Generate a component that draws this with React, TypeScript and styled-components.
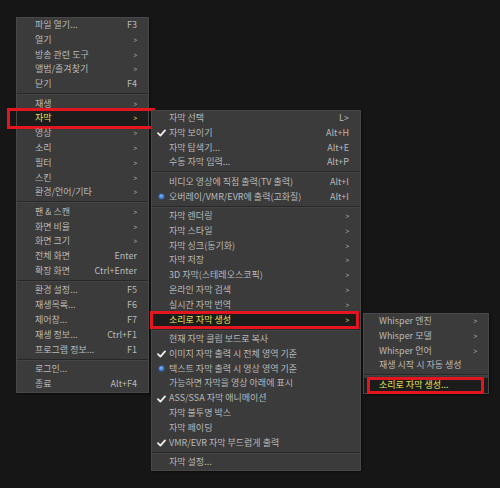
import styled, { createGlobalStyle } from "styled-components";

type Mark = "check" | "dot";
type Box = [number, number, number, number];
type Item =
	| "sep"
	| { label: string; keys?: string; arrow?: boolean; mark?: Mark; hot?: boolean; box?: Box };

const GlobalStyle = createGlobalStyle`
	html, body {
		margin: 0;
		padding: 0;
		background: #161616;
	}
	#root {
		position: relative;
		width: 500px;
		height: 488px;
		overflow: hidden;
		font-family: "Noto Sans CJK KR", "Noto Sans", sans-serif;
	}
`;

const Menu = styled.div<{ $x: number; $y: number; $w: number }>`
	position: absolute;
	left: ${(p) => p.$x}px;
	top: ${(p) => p.$y}px;
	width: ${(p) => p.$w}px;
	box-sizing: border-box;
	background: #3b3b3b;
	border: 1px solid #484848;
	display: flex;
	flex-direction: column;
	box-shadow: 1px 1px 2px rgba(0, 0, 0, 0.5);
`;

const Row = styled.div<{ $pad: number; $hot?: boolean; $box?: Box }>`
	position: relative;
	display: grid;
	grid-template-columns: ${(p) => p.$pad}px 1fr auto;
	align-items: center;
	height: 14.8px;
	padding-right: 11px;
	font-size: 9px;
	line-height: 14.8px;
	white-space: nowrap;
	color: ${(p) => (p.$hot ? "#e6e35a" : "#b9b9b9")};
	background: ${(p) => (p.$hot ? "#1c1c1c" : "transparent")};

	${(p) =>
		p.$box &&
		`&::after {
			content: "";
			position: absolute;
			top: ${p.$box[0]}px;
			right: ${p.$box[1]}px;
			bottom: ${p.$box[2]}px;
			left: ${p.$box[3]}px;
			border: 3px solid #e3151e;
			pointer-events: none;
		}`}
`;

const MarkCell = styled.span`
	display: flex;
	align-items: center;
	justify-content: center;
	padding-left: 2px;
`;

const Label = styled.span``;

const Keys = styled.span`
	text-align: right;
	padding-left: 12px;
`;

const Arrow = styled.span`
	font-size: 8px;
	transform: scaleX(0.8);
	display: inline-block;
`;

const Dot = styled.span`
	width: 5px;
	height: 5px;
	border-radius: 50%;
	background: radial-gradient(circle at 40% 35%, #7fb6ff, #2f78e0 70%);
	box-shadow: 0 0 2px #3a86f0;
`;

const Separator = styled.div`
	height: 4.6px;
	display: flex;
	flex-direction: column;
	justify-content: center;

	&::before {
		content: "";
		height: 1px;
		background: #272727;
	}
	&::after {
		content: "";
		height: 1px;
		background: #444444;
	}
`;

const Check = () => (
	<svg width="9" height="8" viewBox="0 0 9 8">
		<path d="M1 4.2 L3.4 6.6 L8 1.4" fill="none" stroke="#eeeeee" strokeWidth="1.8" strokeLinecap="round" strokeLinejoin="round" />
	</svg>
);

const mainMenu: Item[] = [
	{ label: "파일 열기...", keys: "F3" },
	{ label: "열기", arrow: true },
	{ label: "방송 관련 도구", arrow: true },
	{ label: "앨범/즐겨찾기", arrow: true },
	{ label: "닫기", keys: "F4" },
	"sep",
	{ label: "재생", arrow: true },
	{ label: "자막", arrow: true, hot: true, box: [-3, -7, -3, -10] },
	{ label: "영상", arrow: true },
	{ label: "소리", arrow: true },
	{ label: "필터", arrow: true },
	{ label: "스킨", arrow: true },
	{ label: "환경/언어/기타", arrow: true },
	"sep",
	{ label: "팬 & 스캔", arrow: true },
	{ label: "화면 비율", arrow: true },
	{ label: "화면 크기", arrow: true },
	{ label: "전체 화면", keys: "Enter" },
	{ label: "확장 화면", keys: "Ctrl+Enter" },
	"sep",
	{ label: "환경 설정...", keys: "F5" },
	{ label: "재생목록...", keys: "F6" },
	{ label: "제어창...", keys: "F7" },
	{ label: "재생 정보...", keys: "Ctrl+F1" },
	{ label: "프로그램 정보...", keys: "F1" },
	"sep",
	{ label: "로그인..." },
	{ label: "종료", keys: "Alt+F4" },
];

const subtitleMenu: Item[] = [
	{ label: "자막 선택", keys: "L>" },
	{ label: "자막 보이기", keys: "Alt+H", mark: "check" },
	{ label: "자막 탐색기...", keys: "Alt+E" },
	{ label: "수동 자막 입력...", keys: "Alt+P" },
	"sep",
	{ label: "비디오 영상에 직접 출력(TV 출력)", keys: "Alt+I" },
	{ label: "오버레이/VMR/EVR에 출력(고화질)", keys: "Alt+I", mark: "dot" },
	"sep",
	{ label: "자막 렌더링", arrow: true },
	{ label: "자막 스타일", arrow: true },
	{ label: "자막 싱크(동기화)", arrow: true },
	{ label: "자막 저장", arrow: true },
	{ label: "3D 자막(스테레오스코픽)", arrow: true },
	{ label: "온라인 자막 검색", arrow: true },
	{ label: "실시간 자막 번역", arrow: true },
	{ label: "소리로 자막 생성", arrow: true, hot: true, box: [-2, 1, -2, -2] },
	"sep",
	{ label: "현재 자막 클립 보드로 복사" },
	{ label: "이미지 자막 출력 시 전체 영역 기준", mark: "check" },
	{ label: "텍스트 자막 출력 시 영상 영역 기준", mark: "dot" },
	{ label: "가능하면 자막을 영상 아래에 표시" },
	{ label: "ASS/SSA 자막 애니메이션", mark: "check" },
	{ label: "자막 불투명 박스" },
	{ label: "자막 페이딩" },
	{ label: "VMR/EVR 자막 부드럽게 출력", mark: "check" },
	"sep",
	{ label: "자막 설정..." },
];

const speechMenu: Item[] = [
	{ label: "Whisper 엔진", arrow: true },
	{ label: "Whisper 모델", arrow: true },
	{ label: "Whisper 언어", arrow: true },
	{ label: "재생 시작 시 자동 생성" },
	"sep",
	{ label: "소리로 자막 생성...", hot: true, box: [-1, 4, -1, 3] },
];

function PopupMenu({ items, x, y, w, pad }: { items: Item[]; x: number; y: number; w: number; pad: number }) {
	return (
		<Menu $x={x} $y={y} $w={w}>
			{items.map((item, i) =>
				item === "sep" ? (
					<Separator key={i} />
				) : (
					<Row key={i} $pad={pad} $hot={item.hot} $box={item.box}>
						<MarkCell>
							{item.mark === "check" && <Check />}
							{item.mark === "dot" && <Dot />}
						</MarkCell>
						<Label>{item.label}</Label>
						<Keys>{item.arrow ? <Arrow>&gt;</Arrow> : item.keys}</Keys>
					</Row>
				)
			)}
		</Menu>
	);
}

export default function App() {
	return (
		<>
			<GlobalStyle />
			<PopupMenu items={mainMenu} x={16} y={17} w={133} pad={18} />
			<PopupMenu items={subtitleMenu} x={151} y={110} w={210} pad={17} />
			<PopupMenu items={speechMenu} x={363} y={313} w={126} pad={15} />
		</>
	);
}
